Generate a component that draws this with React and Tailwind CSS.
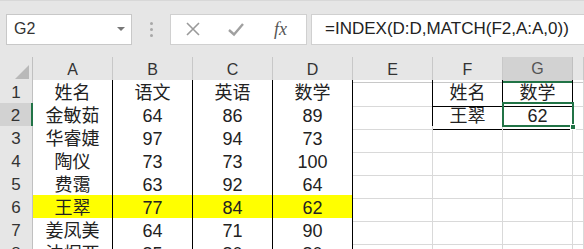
import React from 'react';

const COLS = ['A', 'B', 'C', 'D', 'E', 'F', 'G', ''];

const rows = [
  ['姓名', '语文', '英语', '数学', '', '姓名', '数学'],
  ['金敏茹', '64', '86', '89', '', '王翠', '62'],
  ['华睿婕', '97', '94', '73', '', '', ''],
  ['陶仪', '73', '73', '100', '', '', ''],
  ['费霭', '63', '92', '64', '', '', ''],
  ['王翠', '77', '84', '62', '', '', ''],
  ['姜凤美', '64', '71', '90', '', '', ''],
  ['沈炯亚', '85', '80', '80', '', '', ''],
];

const font = { fontFamily: '"Liberation Sans", "Noto Sans CJK SC", sans-serif' };

const FormulaBar = () => (
  <div className="h-[57px] bg-[#e6e6e6] flex items-center pl-[6px] border-t border-[#d8d8d8]">
    <div className="w-[126px] h-[31px] bg-white border border-[#c8c8c8] flex items-center justify-between pl-[7px] pr-[6px]">
      <span className="text-[16px] text-[#333]">G2</span>
      <span className="w-0 h-0 border-l-[4px] border-r-[4px] border-t-[4px] border-l-transparent border-r-transparent border-t-[#777]" />
    </div>
    <div className="w-[38px] flex flex-col items-center gap-[3px]">
      <span className="w-[3px] h-[3px] bg-[#a8a8a8] rounded-full" />
      <span className="w-[3px] h-[3px] bg-[#a8a8a8] rounded-full" />
      <span className="w-[3px] h-[3px] bg-[#a8a8a8] rounded-full" />
    </div>
    <div className="w-[137px] h-[31px] bg-white border border-[#d0d0d0] flex items-center">
      <svg width="16" height="16" viewBox="0 0 16 16" className="ml-[14px]">
        <path d="M2 2 L14 14 M14 2 L2 14" stroke="#9a9a9a" strokeWidth="1.6" fill="none" />
      </svg>
      <svg width="18" height="16" viewBox="0 0 18 16" className="ml-[26px]">
        <path d="M2 9 L7 13.5 L16 3" stroke="#a0a0a0" strokeWidth="2.4" fill="none" />
      </svg>
      <span className="ml-[29px] text-[18px] italic text-[#555]" style={{ fontFamily: '"Liberation Serif", serif' }}>
        fx
      </span>
    </div>
    <div className="flex-1 h-[31px] ml-[4px] bg-white border border-[#d0d0d0] border-r-0 flex items-center pl-[13px]">
      <span className="text-[17px] text-[#222]">=INDEX(D:D,MATCH(F2,A:A,0))</span>
    </div>
  </div>
);

const Sheet = () => {
  const colCls = 'grid grid-cols-[33px_80px_80px_80px_80px_80px_70px_70px_1fr]';
  return (
    <div className="relative">
      {/* column headers */}
      <div className={`${colCls} h-[23px] bg-[#e6e6e6]`}>
        <div className="flex items-end justify-end pr-[3px] pb-[3px] border-r border-b border-[#c0c0c0]">
          <svg width="14" height="14" viewBox="0 0 14 14">
            <path d="M14 0 L14 14 L0 14 Z" fill="#b9b9b9" />
          </svg>
        </div>
        {COLS.map((c, k) => (
          <div
            key={k}
            className={
              c === 'G'
                ? 'flex items-center justify-center text-[16px] text-[#555] bg-[#d2d2d2] border-r border-[#c0c0c0] border-b-2 border-b-[#217346]'
                : 'flex items-center justify-center text-[16px] text-[#333] border-r border-b border-[#c8c8c8]'
            }
          >
            {c}
          </div>
        ))}
      </div>
      {rows.map((r, i) => {
        const hl = i === 5;
        return (
          <div key={i} className={`${colCls} h-[23px]`}>
            <div
              className={
                i === 1
                  ? 'flex items-center justify-center text-[17px] text-[#333] bg-[#d2d2d2] border-r-2 border-r-[#217346] border-b border-b-[#c0c0c0]'
                  : 'flex items-center justify-center text-[17px] text-[#333] bg-[#e6e6e6] border-r border-b border-[#c0c0c0]'
              }
            >
              {i + 1}
            </div>
            {[0, 1, 2, 3].map((j) => (
              <div
                key={j}
                className={`flex items-center justify-center text-[18px] text-[#222] border-r border-b border-black leading-none ${hl ? 'bg-[#ffff00]' : 'bg-white'}`}
              >
                {r[j]}
              </div>
            ))}
            <div className={`border-b border-[#d9d9d9] border-r ${i < 2 ? 'border-r-black' : 'border-r-[#d9d9d9]'}`} />
            {[5, 6].map((j) => (
              <div
                key={j}
                className={`flex items-center justify-center text-[18px] text-[#222] leading-none border-r border-b ${
                  i < 2 ? 'border-black' : 'border-[#d9d9d9]'
                }`}
              >
                {r[j]}
              </div>
            ))}
            <div className="border-r border-b border-[#d9d9d9]" />
          </div>
        );
      })}
      {/* selection G2 */}
      <div className="absolute left-[502px] top-[45px] w-[72px] h-[25px] border-2 border-[#217346] pointer-events-none" />
      <div className="absolute left-[570px] top-[67px] w-[6px] h-[6px] bg-[#217346] border border-white" />
    </div>
  );
};

export default function App() {
  return (
    <div className="w-[584px] h-[249px] overflow-hidden bg-white" style={font}>
      <FormulaBar />
      <Sheet />
    </div>
  );
}
